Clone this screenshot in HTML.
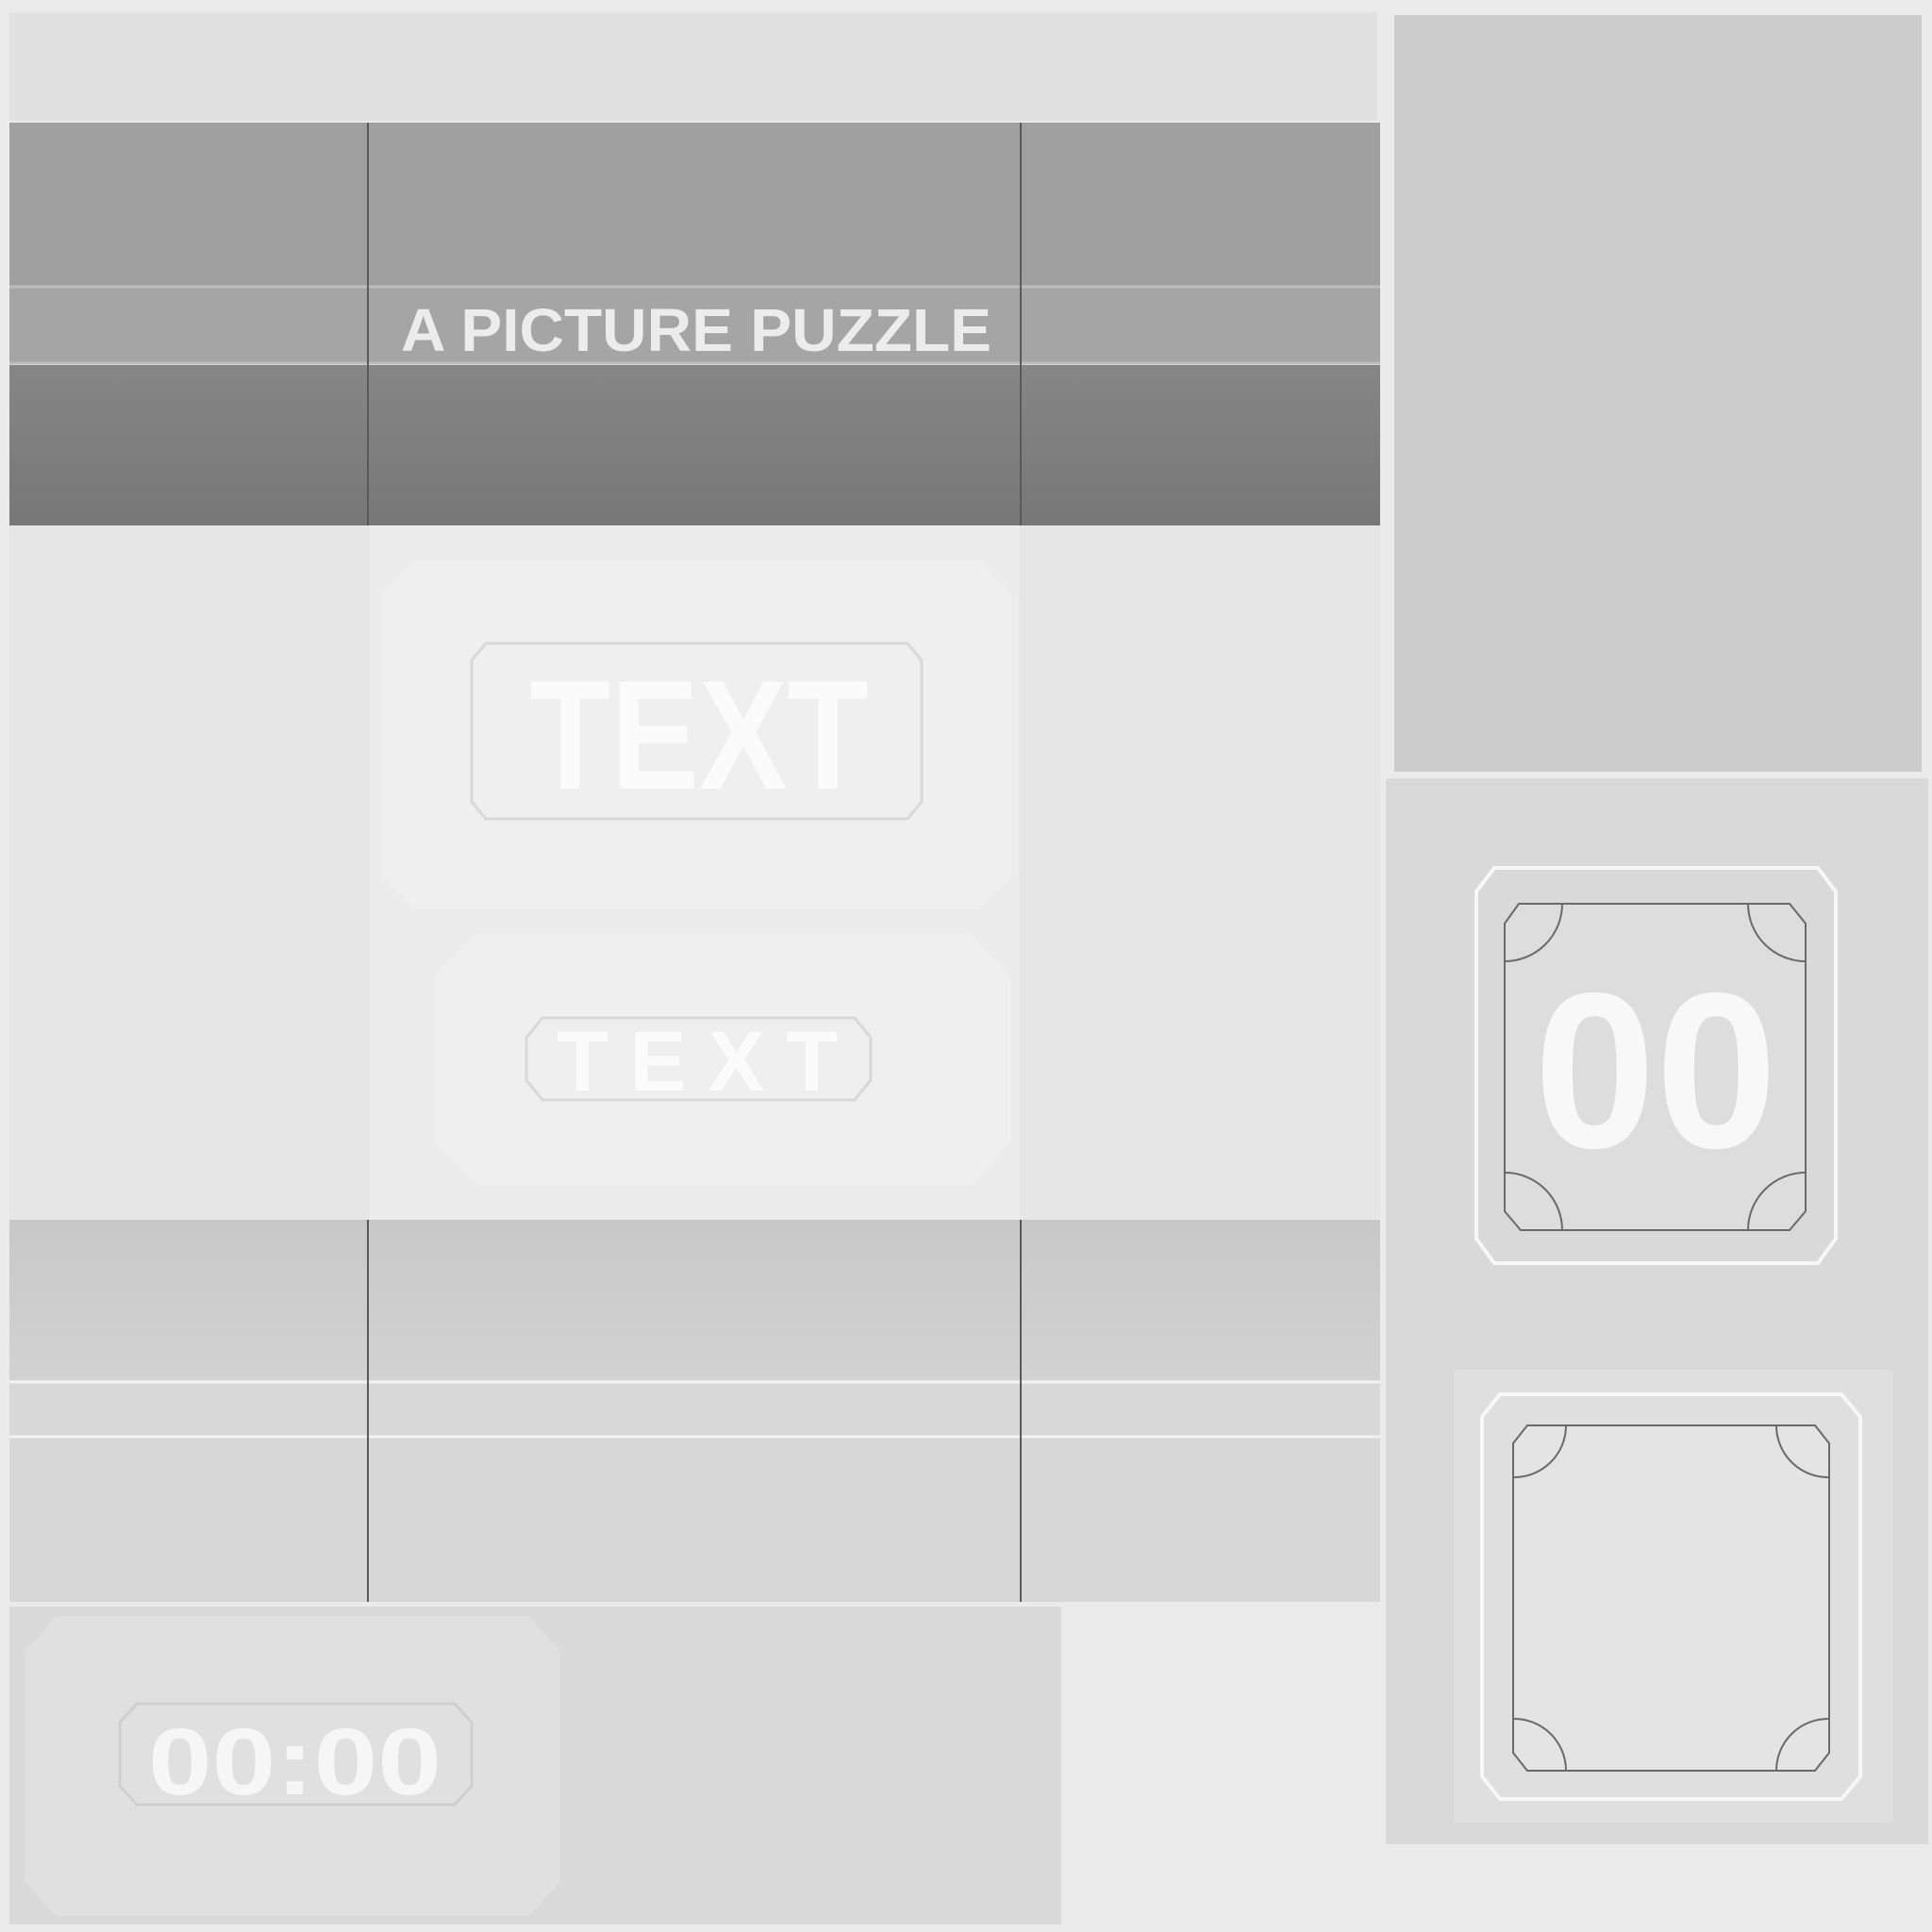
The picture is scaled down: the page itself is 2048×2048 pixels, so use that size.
<!DOCTYPE html>
<html><head><meta charset="utf-8"><style>
html,body{margin:0;padding:0;background:#ebebeb;}
svg{display:block}
text{font-family:"Liberation Sans",sans-serif;font-weight:bold}
</style></head><body>
<svg width="2048" height="2048" viewBox="0 0 2048 2048" xmlns="http://www.w3.org/2000/svg">
<defs>
<linearGradient id="lo" x1="0" y1="0" x2="0" y2="1"><stop offset="0" stop-color="#868686"/><stop offset="1" stop-color="#777777"/></linearGradient>
<linearGradient id="pu" x1="0" y1="0" x2="0" y2="1"><stop offset="0" stop-color="#c8c8c8"/><stop offset="1" stop-color="#d2d2d2"/></linearGradient>
</defs>
<rect width="2048" height="2048" fill="#ebebeb"/>
<rect x="10" y="13" width="1450" height="115" fill="#e1e1e1"/>
<rect x="10" y="130" width="1453" height="175" fill="#a0a0a0"/>
<rect x="10" y="303" width="1453" height="82" fill="#a5a5a5"/>
<line x1="10" y1="304" x2="1463" y2="304" stroke="#bdbdbd" stroke-width="3"/>
<line x1="10" y1="385" x2="1463" y2="385" stroke="#bdbdbd" stroke-width="3"/>
<rect x="10" y="387" width="1453" height="170" fill="url(#lo)"/>
<line x1="390" y1="130" x2="390" y2="557" stroke="#5a5a5a" stroke-width="2"/>
<line x1="1082" y1="130" x2="1082" y2="557" stroke="#5a5a5a" stroke-width="2"/>
<text x="425" y="372" font-size="64" textLength="626" lengthAdjust="spacingAndGlyphs" fill="#ececec">A PICTURE PUZZLE</text>
<rect x="10" y="557" width="382" height="736" fill="#e6e6e6"/>
<rect x="392" y="557" width="689" height="736" fill="#ececec"/>
<rect x="1081" y="557" width="382" height="736" fill="#e6e6e6"/>
<polygon points="440,594 1038,594 1073,630 1073,928 1038,964 440,964 405,928 405,630" fill="#efefef"/>
<polygon points="515,682 962,682 977,700 977,850 962,868 515,868 500,850 500,700" fill="none" stroke="#d8d8d8" stroke-width="3"/>
<text x="741" y="836" font-size="165" text-anchor="middle" textLength="359" lengthAdjust="spacingAndGlyphs" fill="#fbfbfb">TEXT</text>
<polygon points="505,990 1030,990 1071,1035 1071,1211 1030,1256 505,1256 460,1211 460,1035" fill="#efefef"/>
<polygon points="575,1079 906,1079 923,1100 923,1145 906,1166 575,1166 558,1145 558,1100" fill="none" stroke="#d8d8d8" stroke-width="3"/>
<text x="590" y="1156" font-size="90" textLength="298" lengthAdjust="spacing" fill="#fbfbfb">TEXT</text>
<rect x="10" y="1293" width="1453" height="170" fill="url(#pu)"/>
<rect x="10" y="1463" width="1453" height="60" fill="#d8d8d8"/>
<rect x="10" y="1523" width="1453" height="175" fill="#d7d7d7"/>
<line x1="10" y1="1465" x2="1463" y2="1465" stroke="#f2f2f2" stroke-width="3"/>
<line x1="10" y1="1523" x2="1463" y2="1523" stroke="#f2f2f2" stroke-width="3"/>
<line x1="390" y1="1293" x2="390" y2="1698" stroke="#5a5a5a" stroke-width="2"/>
<line x1="1082" y1="1293" x2="1082" y2="1698" stroke="#5a5a5a" stroke-width="2"/>
<rect x="10" y="1703" width="1115" height="337" fill="#dadada"/>
<polygon points="60,1713 560,1713 594,1750 594,1995 560,2031 60,2031 26,1995 26,1750" fill="#e0e0e0"/>
<polygon points="145,1806 482,1806 500,1826 500,1893 482,1913 145,1913 127,1893 127,1826" fill="none" stroke="#cfcfcf" stroke-width="3"/>
<text x="157" y="1902" font-size="100" textLength="311" lengthAdjust="spacingAndGlyphs" fill="#f6f6f6">00:00</text>
<rect x="1478" y="16" width="559" height="802" fill="#cccccc"/>
<rect x="1469" y="825" width="575" height="1130" fill="#d9d9d9"/>
<rect x="1541" y="1452" width="465" height="480" fill="#dfdfdf"/>
<!-- frame 1 -->
<polygon points="1584,920 1927,920 1946,945 1946,1313 1927,1339 1584,1339 1565,1313 1565,945" fill="none" stroke="#f7f7f7" stroke-width="4"/>
<polygon points="1610,958 1897,958 1914,979 1914,1284 1897,1304 1612,1304 1595,1284 1595,979" fill="#dddddd" stroke="#6a6a6a" stroke-width="2"/>
<path d="M1656,958 A61,61 0 0 1 1595,1019 M1853,958 A61,61 0 0 0 1914,1019 M1595,1243 A61,61 0 0 1 1656,1304 M1914,1243 A61,61 0 0 0 1853,1304" fill="none" stroke="#6a6a6a" stroke-width="2"/>
<text x="1626" y="1216" font-size="235" textLength="258" lengthAdjust="spacingAndGlyphs" fill="#f8f8f8">00</text>
<!-- frame 2 -->
<polygon points="1590,1478 1952,1478 1972,1502 1972,1883 1952,1907 1590,1907 1571,1883 1571,1502" fill="none" stroke="#f7f7f7" stroke-width="4"/>
<polygon points="1619,1511 1924,1511 1939,1530 1939,1858 1924,1877 1619,1877 1604,1858 1604,1530" fill="#e4e4e4" stroke="#6a6a6a" stroke-width="2"/>
<path d="M1660,1511 A55,55 0 0 1 1604,1566 M1883,1511 A55,55 0 0 0 1939,1566 M1604,1822 A55,55 0 0 1 1660,1877 M1939,1822 A55,55 0 0 0 1883,1877" fill="none" stroke="#6a6a6a" stroke-width="2"/>
</svg>
</body></html>
